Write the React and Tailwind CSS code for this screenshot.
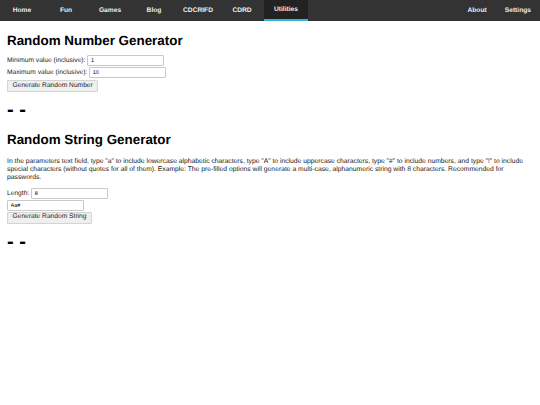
import React from 'react';

const leftLinks = ['Home', 'Fun', 'Games', 'Blog', 'CDCRIFD', 'CDRD', 'Utilities'];
const rightLinks = ['About', 'Settings'];

function Navbar() {
  return (
    <nav className="flex h-[21px] bg-[#333333] text-[6.67px] font-bold text-[#eeeeee]">
      {leftLinks.map(name => (
        <a
          key={name}
          className={`flex w-[44px] items-center justify-center ${
            name === 'Utilities' ? 'border-b-2 border-[#2fb8dc] bg-[#222222]' : ''
          }`}
        >
          {name}
        </a>
      ))}
      <div className="flex-1" />
      {rightLinks.map(name => (
        <a key={name} className="flex items-center px-[9px]">
          {name}
        </a>
      ))}
    </nav>
  );
}

const inputCls =
  'h-[11.5px] w-[77px] rounded-[1px] border border-[#c8c8c8] bg-white px-[2.5px] text-[5.5px] text-black outline-none [text-rendering:geometricPrecision]';

const buttonCls =
  'h-[12px] rounded-[1px] border border-[#d4d4d4] bg-[#efefef] px-[4.5px] text-[6.67px] leading-none text-[#222222] [text-rendering:geometricPrecision]';

function Dashes({ className }) {
  return (
    <div className={`text-[20px] font-bold leading-none text-black ${className}`}>
      - -
    </div>
  );
}

export default function App() {
  return (
    <div
      className="min-h-[405px] bg-white text-[6.67px] text-[#222222] [text-rendering:geometricPrecision]"
      style={{ fontFamily: '"Liberation Sans", Arial, sans-serif' }}
    >
      <Navbar />
      <main className="px-[7px]">
        {/* Numeros */}
        <h1 className="mt-[12px] text-[13.4px] font-bold leading-[15px] text-black">
          Random Number Generator
        </h1>
        <div className="mt-[6.5px] flex h-[12px] items-center">
          <label>Minimum value (inclusive):</label>
          <input className={`ml-[2px] ${inputCls}`} defaultValue="1" />
        </div>
        <div className="flex h-[12px] items-center">
          <label>Maximum value (inclusive):</label>
          <input className={`ml-[2px] ${inputCls}`} defaultValue="10" />
        </div>
        <button className={`mt-[1.5px] ${buttonCls}`}>Generate Random Number</button>
        <Dashes className="mt-[8px]" />

        {/* Cadenas */}
        <h1 className="mt-[12px] text-[13.4px] font-bold leading-[15px] text-black">
          Random String Generator
        </h1>
        <p className="mt-[11px] text-[6.75px] leading-[7.9px] text-[#222222]">
          In the parameters text field, type "a" to include lowercase alphabetic characters, type "A" to
          include uppercase characters, type "#" to include numbers, and type "!" to include special
          characters (without quotes for all of them). Example: The pre-filled options will generate a
          multi-case, alphanumeric string with 8 characters. Recommended for passwords.
        </p>
        <div className="mt-[6px] flex h-[12px] items-center">
          <label>Length:</label>
          <input className={`ml-[2px] ${inputCls}`} defaultValue="8" />
        </div>
        <div className="flex h-[12px] items-center">
          <input className={inputCls} defaultValue="Aa#" />
        </div>
        <button className={buttonCls}>Generate Random String</button>
        <Dashes className="mt-[8px]" />
      </main>
    </div>
  );
}
